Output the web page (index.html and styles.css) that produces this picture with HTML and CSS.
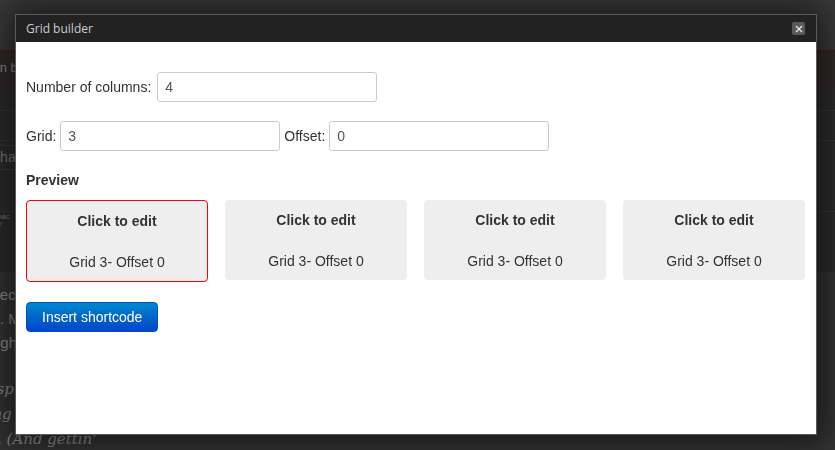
FILE: index.html
```html
<!DOCTYPE html>
<html lang="en">

<head>
    <meta charset="UTF-8">
    <meta name="viewport" content="width=device-width, initial-scale=1.0">
    <title>Grid builder</title>
    <link rel="stylesheet" href="styles.css">
</head>

<body>
    <!-- editor page behind the dialog -->
    <div class="page">
        <div class="page-top"></div>
        <div class="notice"><span>can be restored</span></div>
        <div class="tabs"></div>
        <div class="toolbar">
            <div class="tool-row"></div>
            <div class="tool-row tall">
                <div class="format-select">Char</div>
                <div class="spell">ABC<br>&#10003;</div>
            </div>
            <div class="tool-row mid"></div>
        </div>
        <div class="content">
            <div class="line" style="margin-left: -16px">spec</div>
            <div class="line" style="margin-left: -25px">end. Mo</div>
            <div class="line" style="margin-left: -8px">right</div>
            <div class="line italic gap" style="margin-left: -22px">ansp</div>
            <div class="line italic" style="margin-left: -22px">ning</div>
            <div class="line italic" style="margin-left: -3px">. (And gettin'</div>
        </div>
    </div>

    <div class="modal">
        <div class="modal-head">
            <span class="modal-title">Grid builder</span>
            <button type="button" class="close">
                <svg width="8" height="8" viewBox="0 0 8 8">
                    <path d="M1 1L7 7M7 1L1 7" stroke="#e6e6e6" stroke-width="1.4" />
                </svg>
            </button>
        </div>
        <div class="modal-body">
            <div class="field-row">
                <label for="cols" class="wide-label">Number of columns:</label>
                <input type="text" id="cols" value="4">
            </div>
            <div class="field-row">
                <label for="grid">Grid:</label>
                <input type="text" id="grid" value="3">
                <label for="offset">Offset:</label>
                <input type="text" id="offset" value="0">
            </div>
            <div class="preview-title">Preview</div>
            <div class="preview">
                <div class="cell active">
                    <div class="cell-edit">Click to edit</div>
                    <div class="cell-info">Grid 3- Offset 0</div>
                </div>
                <div class="cell">
                    <div class="cell-edit">Click to edit</div>
                    <div class="cell-info">Grid 3- Offset 0</div>
                </div>
                <div class="cell">
                    <div class="cell-edit">Click to edit</div>
                    <div class="cell-info">Grid 3- Offset 0</div>
                </div>
                <div class="cell">
                    <div class="cell-edit">Click to edit</div>
                    <div class="cell-info">Grid 3- Offset 0</div>
                </div>
            </div>
            <button type="button" class="btn-insert">Insert shortcode</button>
        </div>
    </div>
</body>

</html>
```

FILE: styles.css
```css
* {
    margin: 0;
    padding: 0;
    box-sizing: border-box;
}

body {
    width: 100%;
    height: 100vh;
    overflow: hidden;
    background-color: #3a3a3a;
    font-family: "Liberation Sans", Arial, sans-serif;
    font-size: 14px;
    color: #333;
}

/* Dimmed page */
.page {
    width: 100%;
    height: 100%;
    overflow: hidden;
    background-color: #3a3a3a;
}

.page-top {
    height: 50px;
}

.notice {
    height: 35px;
    border-top: 1px solid #4e1414;
    border-bottom: 1px solid #4e1414;
    background-color: #302a2a;
    color: #8a8a8a;
    font-size: 13px;
    line-height: 33px;
    margin-left: -14px;
    white-space: nowrap;
}

.tabs {
    height: 26px;
    background-color: #2b2b2b;
    border-bottom: 1px solid #353535;
}

.toolbar {
    background-color: #2b2b2b;
}

.tool-row {
    height: 30px;
    border-bottom: 1px solid #353535;
}

.tool-row.tall {
    height: 71px;
    padding-top: 4px;
}

.tool-row.mid {
    height: 61px;
}

.format-select {
    width: 60px;
    height: 25px;
    margin-left: -10px;
    border-top: 1px solid #3c3c3c;
    border-bottom: 1px solid #3c3c3c;
    color: #7c7c7c;
    font-size: 14px;
    line-height: 23px;
}

.spell {
    margin-top: 44px;
    margin-left: -2px;
    font-size: 6px;
    line-height: 7px;
    color: #7c7c7c;
}

.content {
    padding-top: 10px;
    background-color: #333;
    height: 180px;
    color: #8c8c8c;
    font-size: 15px;
}

.line {
    height: 24px;
    line-height: 24px;
    white-space: nowrap;
}

.line.italic {
    font-family: "DejaVu Serif", "Liberation Serif", serif;
    font-style: italic;
    font-size: 15px;
    height: 25px;
    color: #8a8a8a;
}

.line.gap {
    margin-top: 22px;
}

/* Dialog */
.modal {
    position: fixed;
    left: 15px;
    top: 14px;
    width: 802px;
    height: 421px;
    background-color: #fff;
    border: 1px solid #5a5a5a;
    box-shadow: 0 0 30px 8px rgba(0, 0, 0, 0.55);
}

.modal-head {
    height: 27px;
    background-color: #222;
    display: flex;
    align-items: center;
    justify-content: space-between;
    padding: 0 11px 0 10px;
}

.modal-title {
    font-family: "Open Sans", sans-serif;
    font-size: 12px;
    color: #cfcfcf;
}

.close {
    width: 13px;
    height: 13px;
    border: none;
    border-radius: 2px;
    background-color: #595959;
    display: flex;
    align-items: center;
    justify-content: center;
    cursor: pointer;
}

.modal-body {
    padding: 30px 10px 10px 10px;
}

.field-row {
    display: flex;
    align-items: center;
    gap: 4px;
    margin-bottom: 19px;
}

label {
    color: #333;
    white-space: nowrap;
}

.wide-label {
    margin-right: 2px;
}

input {
    width: 220px;
    height: 30px;
    border: 1px solid #ccc;
    border-radius: 3px;
    padding-left: 7px;
    font-family: "Liberation Sans", Arial, sans-serif;
    font-size: 14px;
    color: #555;
}

.preview-title {
    font-weight: bold;
    line-height: 20px;
    margin-bottom: 10px;
}

.preview {
    display: flex;
    gap: 17px;
    align-items: flex-start;
}

.cell {
    width: 182px;
    background-color: #eee;
    border-radius: 4px;
    padding: 10px 0 9px 0;
    text-align: center;
    cursor: pointer;
}

.cell.active {
    border: 1px solid #f00;
}

.cell-edit {
    font-weight: bold;
    line-height: 20px;
}

.cell-info {
    margin-top: 21px;
    line-height: 20px;
}

/* Button styling */
.btn-insert {
    margin-top: 20px;
    height: 30px;
    padding: 0 15px;
    border: 1px solid #0050c0;
    border-radius: 4px;
    background-image: linear-gradient(#0088cc, #0044cc);
    color: #fff;
    font-family: "Liberation Sans", Arial, sans-serif;
    font-size: 14px;
    cursor: pointer;
}
```
